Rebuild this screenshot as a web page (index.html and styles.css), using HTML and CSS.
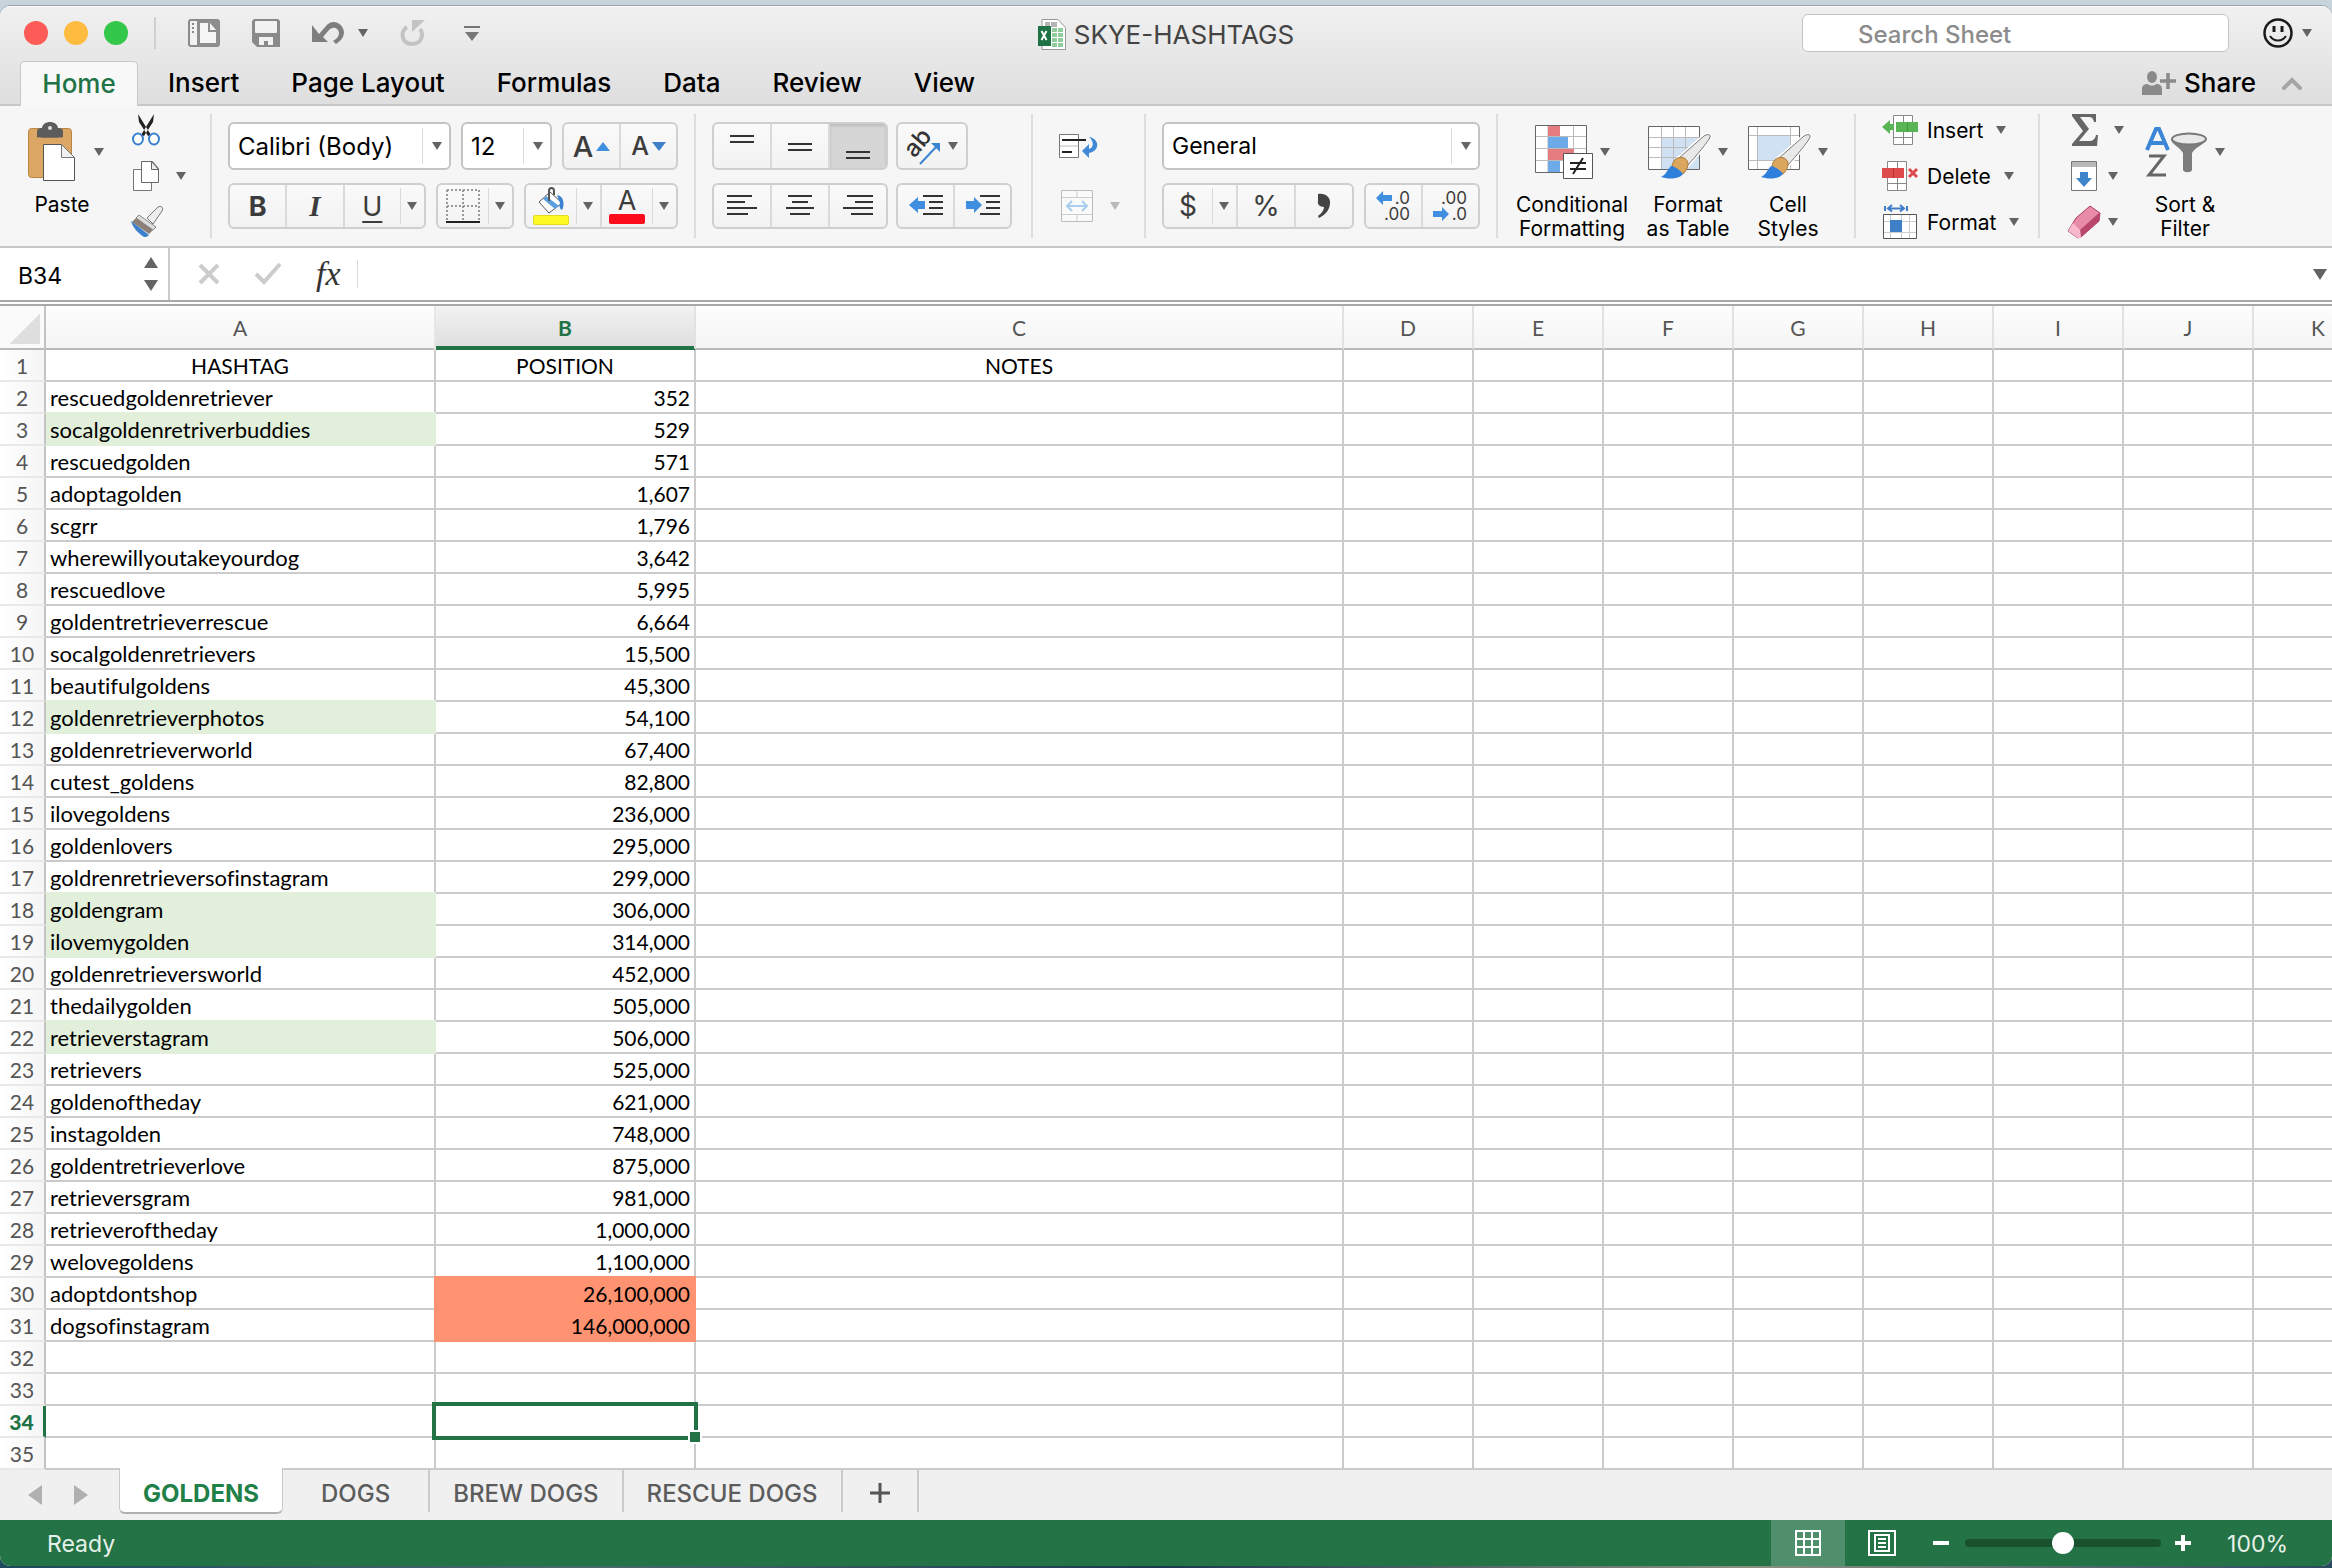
FILE: index.html
```html
<!DOCTYPE html>
<html lang="en">
<head>
    <meta charset="UTF-8">
    <meta name="viewport" content="width=device-width, initial-scale=1.0">
    <title>SKYE-HASHTAGS</title>
    <link rel="stylesheet" href="styles.css">
</head>
<body>
    <div class="window">
        <header class="titlebar">
            <div class="title-row">
                <div class="quick">
                    <div class="lights">
                        <button class="light red" aria-label="Close"></button>
                        <button class="light yellow" aria-label="Minimize"></button>
                        <button class="light green" aria-label="Zoom"></button>
                    </div>
                    <span class="divider"></span>
                    <button class="plain" aria-label="Templates">
                        <svg width="32" height="28" viewBox="0 0 32 28"><rect x="1" y="1" width="30" height="26" rx="2" fill="#f2f2f2" stroke="#8a8a8a" stroke-width="2"/><rect x="9" y="1" width="22" height="26" fill="#8e8e8e"/><path d="M12 4h10l6 7v13H12z" fill="#f6f6f6"/><path d="M21 4v8h7" fill="none" stroke="#8e8e8e" stroke-width="2"/><path d="M5 4v10" stroke="#8a8a8a" stroke-width="2" stroke-dasharray="2 2"/></svg>
                    </button>
                    <button class="plain" aria-label="Save">
                        <svg width="28" height="28" viewBox="0 0 28 28"><path d="M2 0h24l2 2v26H5l-5-5V2z" fill="#8a8a8a"/><rect x="3" y="2" width="22" height="12" rx="1" fill="#f2f2f2"/><path d="M7 18h14v8h-5v-4h-4v4H7z" fill="#f2f2f2"/></svg>
                    </button>
                    <button class="plain undo" aria-label="Undo">
                        <svg width="32" height="22" viewBox="0 0 32 22"><path d="M0 3v17h16l-5-5 6-7c5-5 10-1 10 3 0 3-2 6-6 8l3 3c5-3 8-7 8-12C31 1 20-4 14 4l-7 8z" fill="#7e7e7e"/></svg>
                        <span class="caret"></span>
                    </button>
                    <button class="plain" aria-label="Redo" disabled>
                        <svg width="26" height="27" viewBox="0 0 26 27"><path d="M7 7C0 11 1 24 12 24c10 0 12-10 8-15" fill="none" stroke="#c3c3c3" stroke-width="4"/><path d="M12 0h13L12 12z" fill="#c3c3c3"/></svg>
                    </button>
                    <button class="plain customize" aria-label="Customize toolbar">
                        <svg width="16" height="15" viewBox="0 0 16 15"><path d="M0 1h16" stroke="#777" stroke-width="2"/><path d="M1 6h14l-7 9z" fill="#777"/></svg>
                    </button>
                </div>
                <h1 class="doc-title">
                    <svg width="28" height="31" viewBox="0 0 28 31"><path d="M4 .5h16l7.500 8v22H4z" fill="#fff" stroke="#999"/><path d="M7 3h5v5H7zM13 3h6v5h-6z" fill="#b5b5b5"/><path d="M14 9h5v4h-5zM20 9h5v4h-5zM14 14h5v4h-5zM20 14h5v4h-5zM14 19h5v4h-5zM20 19h5v4h-5zM14 24h5v4h-5zM20 24h5v4h-5z" fill="#8fcb9b"/><path d="M0 7h13v20H0z" fill="#1f7244"/><path d="M3.500 12l5 9M8.500 12l-5 9" stroke="#fff" stroke-width="2"/></svg>
                    <span>SKYE-HASHTAGS</span>
                </h1>
                <div class="title-right">
                    <input class="search" type="text" placeholder="Search Sheet" aria-label="Search Sheet">
                    <button class="plain smile" aria-label="Feedback">
                        <svg width="30" height="30" viewBox="0 0 30 30"><circle cx="15" cy="15" r="13.500" fill="none" stroke="#1a1a1a" stroke-width="2.500"/><path d="M11 8v6M19 8v6" stroke="#1a1a1a" stroke-width="3"/><path d="M7 18c4 6 12 6 16 0" fill="none" stroke="#1a1a1a" stroke-width="2"/></svg>
                        <span class="caret"></span>
                    </button>
                </div>
            </div>
            <nav class="tabs">
                <button class="tab active">Home</button>
                <button class="tab">Insert</button>
                <button class="tab">Page Layout</button>
                <button class="tab">Formulas</button>
                <button class="tab">Data</button>
                <button class="tab">Review</button>
                <button class="tab">View</button>
                <button class="share">
                    <svg width="34" height="24" viewBox="0 0 34 24"><ellipse cx="10" cy="6" rx="5" ry="6" fill="#8a8a8a"/><path d="M0 24v-6c0-4 3-5 6-5 2 2 6 2 8 0 3 0 6 1 6 5v6z" fill="#8a8a8a"/><path d="M26 2v16M18 10h16" stroke="#8a8a8a" stroke-width="3.500"/></svg>
                    <span>Share</span>
                </button>
                <button class="plain collapse" aria-label="Collapse ribbon">
                    <svg width="20" height="13" viewBox="0 0 20 13"><path d="M2 11l8-8 8 8" fill="none" stroke="#a6a6a6" stroke-width="4" stroke-linecap="round"/></svg>
                </button>
            </nav>
        </header>

        <div class="ribbon">
            <section class="group clipboard">
                <button class="big">
                    <span class="big-icon">
                        <svg width="47" height="60" viewBox="0 0 47 60"><rect x=".5" y="6.500" width="43" height="49" rx="3" fill="#dca765" stroke="#b98543"/><path d="M9 15V9c0-2 2-3 5-3 1-8 15-8 16 0 3 0 5 1 5 3v6c0 1-26 1-26 0z" fill="#5c5c5c"/><circle cx="22" cy="6" r="2" fill="#e0e0e0"/><path d="M15.500 22.500h18l13 13v23h-31z" fill="#fff" stroke="#555"/><path d="M33.500 22.500v13h13z" fill="#f0f0f0" stroke="#777"/></svg>
                        <span class="caret"></span>
                    </span>
                    <span class="big-label">Paste</span>
                </button>
                <div class="stack">
                    <button class="small" aria-label="Cut">
                        <svg width="32" height="32" viewBox="0 0 32 32"><path d="M8 0l13 21-3 1L9 8zM24 0L11 21l3 1 9-14z" fill="#222"/><ellipse cx="8" cy="25" rx="5" ry="5.500" fill="#fff" stroke="#3a82cf" stroke-width="2"/><ellipse cx="24" cy="25" rx="5" ry="5.500" fill="#fff" stroke="#3a82cf" stroke-width="2"/></svg>
                    </button>
                    <button class="small" aria-label="Copy">
                        <svg width="32" height="32" viewBox="0 0 32 32"><path d="M3.500 9.500h18v21h-18z" fill="#fff" stroke="#777"/><path d="M11.500 1.500h11l6 7v14h-17z" fill="#fff" stroke="#666"/><path d="M21.500 1.500v8h7z" fill="#eee" stroke="#666"/></svg>
                        <span class="caret"></span>
                    </button>
                    <button class="small" aria-label="Format painter">
                        <svg width="34" height="32" viewBox="0 0 34 32"><path d="M17 12L28 1c3-2 6 1 4 4L23 18z" fill="#eee" stroke="#777"/><path d="M9 9l17 12-3 3L6 12z" fill="#ddd" stroke="#888"/><path d="M6 12l17 12-4 4L2 16z" fill="#8b7f78"/><path d="M1 15l18 14c-2 2-3 2-5 2C8 27 3 22 1 15z" fill="#3b7fcd"/></svg>
                    </button>
                </div>
            </section>

            <section class="group font-group">
                <div class="row">
                    <span class="combo font-name"><select aria-label="Font"><option>Calibri (Body)</option></select></span>
                    <span class="combo font-size"><select aria-label="Font size"><option>12</option></select></span>
                    <div class="seg size-seg">
                        <button aria-label="Increase font size"><span class="glyph-lg">A</span><i class="tri up"></i></button>
                        <button aria-label="Decrease font size"><span class="glyph-md">A</span><i class="tri down"></i></button>
                    </div>
                </div>
                <div class="row">
                    <div class="seg biu">
                        <button class="bold">B</button>
                        <button class="italic">I</button>
                        <button class="underline">U</button>
                        <button class="drop" aria-label="Underline options"><span class="caret"></span></button>
                    </div>
                    <div class="seg borders">
                        <button aria-label="Borders"><svg width="34" height="34" viewBox="0 0 34 34"><path d="M1 1h32M1 17h32M1 1v30M17 1v30M33 1v30" stroke="#999" stroke-width="2" stroke-dasharray="2 2"/><path d="M0 33h34" stroke="#222" stroke-width="2"/></svg></button>
                        <button class="drop" aria-label="Border options"><span class="caret"></span></button>
                    </div>
                    <div class="seg colors">
                        <button aria-label="Fill color"><svg width="36" height="38" viewBox="0 0 36 38"><path d="M17 5l12 11-13 10L6 15z" fill="#fff" stroke="#555"/><path d="M13 9l13 10-4 3-12-10z" fill="#5da0e0"/><path d="M16 14V4c0-4 5-4 5 0v4" fill="none" stroke="#555" stroke-width="2"/><path d="M24 8c7 1 8 10 5 15-2-1-3-3-2-7z" fill="#3c82d0"/><rect x=".5" y="28.500" width="35" height="9" rx="1" fill="#fdf922" stroke="#e3dc1c"/></svg></button>
                        <button class="drop" aria-label="Fill options"><span class="caret"></span></button>
                        <button class="font-color" aria-label="Font color"><span>A</span><i class="red-bar"></i></button>
                        <button class="drop" aria-label="Font color options"><span class="caret"></span></button>
                    </div>
                </div>
            </section>

            <section class="group align-group">
                <div class="row">
                    <div class="seg three">
                        <button aria-label="Top align"><svg width="24" height="30" viewBox="0 0 24 30"><path d="M0 5h24M0 11h24" stroke="#333" stroke-width="2"/></svg></button>
                        <button aria-label="Middle align"><svg width="24" height="30" viewBox="0 0 24 30"><path d="M0 13h24M0 19h24" stroke="#333" stroke-width="2"/></svg></button>
                        <button class="pressed" aria-label="Bottom align"><svg width="24" height="30" viewBox="0 0 24 30"><path d="M0 21h24M0 27h24" stroke="#333" stroke-width="2"/></svg></button>
                    </div>
                    <div class="seg orient">
                        <button aria-label="Orientation"><svg width="34" height="34" viewBox="0 0 34 34"><text x="4" y="28" transform="rotate(-50 8 24)" font-family="Inter, sans-serif" font-size="24" font-weight="500" fill="#333">ab</text><path d="M14 35L31 17" stroke="#3a84d2" stroke-width="2"/><path d="M25 14h9v9z" fill="#3a84d2"/></svg><span class="caret"></span></button>
                    </div>
                </div>
                <div class="row">
                    <div class="seg three">
                        <button aria-label="Align left"><svg width="30" height="22" viewBox="0 0 30 22"><path d="M0 1h25M0 7h18M0 13h30M0 19h21" stroke="#333" stroke-width="2"/></svg></button>
                        <button aria-label="Center"><svg width="28" height="22" viewBox="0 0 28 22"><path d="M2 1h24M6 7h16M0 13h28M4 19h20" stroke="#333" stroke-width="2"/></svg></button>
                        <button aria-label="Align right"><svg width="30" height="22" viewBox="0 0 30 22"><path d="M4 1h26M12 7h18M0 13h30M8 19h22" stroke="#333" stroke-width="2"/></svg></button>
                    </div>
                    <div class="seg indent">
                        <button aria-label="Decrease indent"><svg width="34" height="22" viewBox="0 0 34 22"><path d="M14 1h20M20 7h14M20 13h14M14 19h20" stroke="#333" stroke-width="2"/><path d="M0 10l9-8v4h7v8H9v4z" fill="#3f8ee0"/></svg></button>
                        <button aria-label="Increase indent"><svg width="34" height="22" viewBox="0 0 34 22"><path d="M14 1h20M20 7h14M20 13h14M14 19h20" stroke="#333" stroke-width="2"/><path d="M16 10L8 2v4H0v8h8v4z" fill="#3f8ee0"/></svg></button>
                    </div>
                </div>
            </section>

            <section class="group wrap-group">
                <button class="icon-row" aria-label="Wrap text">
                    <svg width="40" height="26" viewBox="0 0 40 26"><path d="M.5 1.500h19v23H.5z" fill="#fff" stroke="#777"/><path d="M1 13h18" stroke="#bbb"/><path d="M3 7h24M3 19h10" stroke="#222" stroke-width="2"/><path d="M30 4c10 1 12 14 0 16v5l-7-7 7-7v5c5-1 5-8 0-12z" fill="#4189d6"/></svg>
                </button>
                <button class="icon-row" aria-label="Merge cells" disabled>
                    <svg width="36" height="32" viewBox="0 0 36 32"><path d="M2.500.5h31v31h-31z" fill="#fafafa" stroke="#bcbcbc"/><path d="M3 7.500h30M3 24.500h30M18 0v7M18 25v7" stroke="#ccc"/><path d="M8 16h20M13 11l-5 5 5 5M23 11l5 5-5 5" fill="none" stroke="#a9cdef" stroke-width="2"/></svg>
                    <span class="caret"></span>
                </button>
            </section>

            <section class="group number-group">
                <div class="row">
                    <span class="combo format"><select aria-label="Number format"><option>General</option></select></span>
                </div>
                <div class="row">
                    <div class="seg number">
                        <button class="currency">$</button>
                        <button class="drop" aria-label="Currency options"><span class="caret"></span></button>
                        <button>%</button>
                        <button aria-label="Comma style"><svg width="14" height="24" viewBox="0 0 14 24"><path d="M1 0c8-1 13 4 12 10-1 7-5 11-11 14l-1-2c4-3 6-6 6-9-4 0-7-3-6-6z" fill="#444"/></svg></button>
                    </div>
                    <div class="seg decimals">
                        <button class="dec"><span><svg width="16" height="14" viewBox="0 0 16 14"><path d="M0 7l7-7v4h9v6H7v4z" fill="#3f8ee0"/></svg>&thinsp;.0</span><span>.00</span></button>
                        <button class="dec"><span>.00</span><span><svg width="16" height="14" viewBox="0 0 16 14"><path d="M16 7L9 0v4H0v6h9v4z" fill="#3f8ee0"/></svg>&thinsp;.0</span></button>
                    </div>
                </div>
            </section>

            <section class="group styles-group">
                <button class="big wide">
                    <span class="big-icon">
                        <svg width="58" height="54" viewBox="0 0 58 54"><path d="M.5.5h51v47H.5z" fill="#fff"/><path d="M13 .5v47M38.500 .5v47M.5 11.500h51M.5 23.500h51M.5 35.500h51" stroke="#bbb"/><path d="M13 1h12v10H13zM13 24h26v11H13z" fill="#e57c80"/><path d="M13 12h20v11H13zM13 36h12v11H13z" fill="#6daae8"/><path d="M.5.5h51v47H.5z" fill="none" stroke="#666"/><path d="M28.500 28.500h29v25h-29z" fill="#fff" stroke="#555"/><path d="M35 38h16M35 44h16M48 33L38 49" stroke="#222" stroke-width="2"/></svg>
                        <span class="caret"></span>
                    </span>
                    <span class="big-label">Conditional<br>Formatting</span>
                </button>
                <button class="big">
                    <span class="big-icon">
                        <svg width="63" height="54" viewBox="0 0 63 54"><path d="M.5 1.500h51v43H.5z" fill="#fff"/><path d="M13 12h38v32H13z" fill="#cfe1f3"/><path d="M13.500 2v43M25.500 2v43M37.500 2v43M.5 12.500h51M.5 22.500h51M.5 32.500h51" stroke="#bbb"/><path d="M.5 1.500h51v43H.5z" fill="none" stroke="#666"/><use href="#brush"/></svg>
                        <span class="caret"></span>
                    </span>
                    <span class="big-label">Format<br>as Table</span>
                </button>
                <button class="big">
                    <span class="big-icon">
                        <svg width="63" height="54" viewBox="0 0 63 54"><path d="M.5 1.500h51v43H.5z" fill="#fff"/><path d="M9 10h34v25H9z" fill="#cfe1f3"/><path d="M9.500 2v43M42.500 2v43M.5 10.500h51M.5 35.500h51" stroke="#bbb"/><path d="M.5 1.500h51v43H.5z" fill="none" stroke="#666"/>
                            <g id="brush"><path d="M31 33L56 11c3-2 7-2 6 1-1 4-14 19-22 28z" fill="#e9e9e9" stroke="#fff" stroke-width="4"/><path d="M31 33L56 11c3-2 7-2 6 1-1 4-14 19-22 28z" fill="#e9e9e9" stroke="#777"/><path d="M24 41c1-7 7-10 12-8 6 3 5 10-1 16z" fill="#dba75e" stroke="#a87a3a"/><path d="M23 41c5 1 9 4 12 8-5 6-16 5-22 3 5-2 6-7 10-11z" fill="#2f7fdc"/></g></svg>
                        <span class="caret"></span>
                    </span>
                    <span class="big-label">Cell<br>Styles</span>
                </button>
            </section>

            <section class="group cells-group">
                <button class="small">
                    <svg width="36" height="32" viewBox="0 0 36 32"><path d="M11.500 1.500h19v29h-19zM21.500 1v30M11.500 23.500h19" fill="#fff" stroke="#888"/><path d="M14 8h22v10H14z" fill="#58b455"/><path d="M0 13l8-7v4h4v6H8v4z" fill="#58b455"/><path d="M25.500 8v10" stroke="#3f9a3d"/></svg>
                    <span>Insert</span><span class="caret"></span>
                </button>
                <button class="small">
                    <svg width="36" height="32" viewBox="0 0 36 32"><path d="M5.500 1.500h19v29h-19zM15.500 1v30M5.500 23.500h19" fill="#fff" stroke="#888"/><path d="M0 8h22v10H0z" fill="#dd4b4c"/><path d="M11.500 8v10" stroke="#b83234"/><path d="M27 9l8 8M35 9l-8 8" stroke="#dd4b4c" stroke-width="3"/></svg>
                    <span>Delete</span><span class="caret"></span>
                </button>
                <button class="small">
                    <svg width="36" height="34" viewBox="0 0 36 34"><path d="M1.500 9.500h33v24h-33z" fill="#fff"/><path d="M8.500 9v24M19.500 9v24M27.500 9v24M1 16.500h33M1 27.500h33" stroke="#ccc"/><path d="M1.500 9.500h33v24h-33z" fill="none" stroke="#555"/><path d="M8 15h12v12H8z" fill="#3f7fc8"/><path d="M3 1v5M25 1v5M7 3.500h14M10 0L6 3.500l4 3M18 0l4 3.500-4 3" fill="none" stroke="#3f7fc8" stroke-width="2"/></svg>
                    <span>Format</span><span class="caret"></span>
                </button>
            </section>

            <section class="group edit-group">
                <div class="stack">
                    <button class="small sum" aria-label="AutoSum">
                        <svg width="34" height="32" viewBox="0 0 34 32"><path d="M4 0h24v8h-2c-1-4-2-5-6-5h-8l9 12-10 12h10c4 0 6-2 7-6h2l-1 11H4v-2l11-13L4 2z" fill="#666"/></svg>
                        <span class="caret"></span>
                    </button>
                    <button class="small" aria-label="Fill">
                        <svg width="34" height="32" viewBox="0 0 34 32"><path d="M3.500 1.500h25v29h-25z" fill="#fff" stroke="#777"/><path d="M4 2h24v5H4z" fill="#b9b9b9"/><path d="M12 12h8v6h4l-8 9-8-9h4z" fill="#4084cc"/></svg>
                        <span class="caret"></span>
                    </button>
                    <button class="small" aria-label="Clear">
                        <svg width="34" height="34" viewBox="0 0 34 34"><path d="M8 13L22 1l10 7-1 8-18 16-3 1L0 26z" fill="#e88ba6" stroke="#a83e60"/><path d="M12 25L31 8l1 1-1 7-18 16z" fill="#b8476b"/><path d="M5 18l7 7 1 8-3 0L0 26z" fill="#f6b8ca"/></svg>
                        <span class="caret"></span>
                    </button>
                </div>
                <button class="big">
                    <span class="big-icon">
                        <svg width="62" height="52" viewBox="0 0 62 52"><path d="M1 24L10 3h3l9 21M5 17h13" fill="none" stroke="#3b86d6" stroke-width="4"/><path d="M3 30h15L3 49h17" fill="none" stroke="#666" stroke-width="3"/><path d="M25 13c0 5 9 8 12 14v17c1 3 8 3 9 0V27c3-6 14-9 14-14z" fill="#7d7d7d"/><ellipse cx="43" cy="13" rx="17" ry="5.500" fill="#e8e8e8" stroke="#777" stroke-width="2"/></svg>
                        <span class="caret"></span>
                    </span>
                    <span class="big-label">Sort &amp;<br>Filter</span>
                </button>
            </section>
        </div>

        <div class="formula-bar">
            <div class="name-box">
                <input type="text" value="B34" aria-label="Name box">
                <span class="stepper"><i></i><i></i></span>
            </div>
            <button class="plain" aria-label="Cancel" disabled><svg width="22" height="22" viewBox="0 0 22 22"><path d="M2 2l18 18M20 2L2 20" stroke="#ccc" stroke-width="4"/></svg></button>
            <button class="plain" aria-label="Enter" disabled><svg width="28" height="22" viewBox="0 0 28 22"><path d="M2 11l8 8L26 1" fill="none" stroke="#ccc" stroke-width="4"/></svg></button>
            <button class="plain fx" aria-label="Insert function">fx</button>
            <input class="formula" type="text" aria-label="Formula">
            <span class="caret large"></span>
        </div>

        <main class="sheet">
            <table>
                <colgroup>
                    <col class="c-num"><col class="c-a"><col class="c-b"><col class="c-c">
                    <col span="8" class="c-rest">
                </colgroup>
                <thead><tr id="letters"></tr></thead>
                <tbody id="cells"></tbody>
            </table>
        </main>

        <div class="sheet-tabs">
            <button class="nav prev" aria-label="Previous sheet"></button>
            <button class="nav next" aria-label="Next sheet"></button>
            <button class="sheet-tab current">GOLDENS</button>
            <button class="sheet-tab">DOGS</button>
            <button class="sheet-tab">BREW DOGS</button>
            <button class="sheet-tab">RESCUE DOGS</button>
            <button class="sheet-tab add" aria-label="Add sheet"><svg width="20" height="20" viewBox="0 0 20 20"><path d="M10 0v20M0 10h20" stroke="#555" stroke-width="3"/></svg></button>
        </div>

        <footer class="status">
            <span class="ready">Ready</span>
            <button class="view on" aria-label="Normal view"><svg width="26" height="26" viewBox="0 0 26 26"><path d="M1 1h24v24H1zM9 1v24M17 1v24M1 9h24M1 17h24" fill="none" stroke="#fff" stroke-width="2"/></svg></button>
            <button class="view" aria-label="Page layout view"><svg width="28" height="26" viewBox="0 0 28 26"><path d="M1 1h26v24H1z" fill="none" stroke="#fff" stroke-width="2"/><path d="M7 5h14v16H7zM10 9h8M10 13h8M10 17h8" fill="none" stroke="#fff" stroke-width="2"/></svg></button>
            <button class="zoom-btn" aria-label="Zoom out"><svg width="16" height="16" viewBox="0 0 16 16"><path d="M0 8h16" stroke="#fff" stroke-width="4"/></svg></button>
            <input type="range" min="0" max="100" value="50" aria-label="Zoom">
            <button class="zoom-btn" aria-label="Zoom in"><svg width="16" height="16" viewBox="0 0 16 16"><path d="M0 8h16M8 0v16" stroke="#fff" stroke-width="4"/></svg></button>
            <span class="percent">100%</span>
        </footer>
    </div>

    <script>
        const rows = [
            ['HASHTAG', 'POSITION', 'NOTES'],
            ['rescuedgoldenretriever', '352'],
            ['socalgoldenretriverbuddies', '529'],
            ['rescuedgolden', '571'],
            ['adoptagolden', '1,607'],
            ['scgrr', '1,796'],
            ['wherewillyoutakeyourdog', '3,642'],
            ['rescuedlove', '5,995'],
            ['goldentretrieverrescue', '6,664'],
            ['socalgoldenretrievers', '15,500'],
            ['beautifulgoldens', '45,300'],
            ['goldenretrieverphotos', '54,100'],
            ['goldenretrieverworld', '67,400'],
            ['cutest_goldens', '82,800'],
            ['ilovegoldens', '236,000'],
            ['goldenlovers', '295,000'],
            ['goldrenretrieversofinstagram', '299,000'],
            ['goldengram', '306,000'],
            ['ilovemygolden', '314,000'],
            ['goldenretrieversworld', '452,000'],
            ['thedailygolden', '505,000'],
            ['retrieverstagram', '506,000'],
            ['retrievers', '525,000'],
            ['goldenoftheday', '621,000'],
            ['instagolden', '748,000'],
            ['goldentretrieverlove', '875,000'],
            ['retrieversgram', '981,000'],
            ['retrieveroftheday', '1,000,000'],
            ['welovegoldens', '1,100,000'],
            ['adoptdontshop', '26,100,000'],
            ['dogsofinstagram', '146,000,000'],
        ];
        const greenRows = [3, 12, 18, 19, 22];
        const orangeRows = [30, 31];
        const letters = 'ABCDEFGHIJK'.split('');
        const totalRows = 35;
        const selected = { row: 34, col: 1 };

        document.getElementById('letters').innerHTML = '<th class="corner"></th>' +
            letters.map((l, i) => `<th class="${i === selected.col ? 'selected' : ''}">${l}</th>`).join('');

        const tbody = document.getElementById('cells');
        for (let r = 1; r <= totalRows; r++) {
            const row = tbody.insertRow();
            if (r === 1) row.className = 'head';
            let html = `<th class="${r === selected.row ? 'selected' : ''}">${r}</th>`;
            letters.forEach((l, i) => {
                let cls = i === 0 ? 'tag' : '';
                if (i === 0 && greenRows.includes(r)) cls = 'tag good';
                if (i === 1) cls = orangeRows.includes(r) ? 'num bad' : 'num';
                const cursor = r === selected.row && i === selected.col;
                if (cursor) cls += ' cursor';
                const text = (rows[r - 1] && rows[r - 1][i]) || '';
                html += `<td class="${cls}">${text}${cursor ? '<i class="frame"></i>' : ''}</td>`;
            });
            row.innerHTML = html;
        }
    </script>
</body>
</html>
```
FILE: styles.css
```css
* {
    box-sizing: border-box;
}
body {
    margin: 0;
    padding: 6px 0 2px;
    background-color: #c7d4db;
    background-image: linear-gradient(to right, #1c4a5c, #4a6a6c, #1c3850, #8a9080, #2a4a60);
    background-size: 100% 100px;
    background-position: bottom;
    background-repeat: no-repeat;
    font-family: Inter, "Liberation Sans", sans-serif;
    color: #111;
}
.window {
    border-radius: 10px;
    overflow: hidden;
    background: #fff;
    box-shadow: 0 -1px 0 #9aa5ab;
}
button {
    font: inherit;
    color: inherit;
    padding: 0;
    border: none;
    background: none;
    display: flex;
    align-items: center;
    justify-content: center;
}
svg {
    display: block;
    flex: none;
    overflow: visible;
}
.caret {
    flex: none;
    border-left: 5px solid transparent;
    border-right: 5px solid transparent;
    border-top: 8px solid #646464;
}
.caret.large {
    border-left-width: 7px;
    border-right-width: 7px;
    border-top-width: 11px;
}

/* title bar */
.titlebar {
    background: linear-gradient(#f0f0f0, #dedede);
    border-top: 1px solid #fafafa;
    box-shadow: inset 0 -2px 0 #c8c8c8;
}
.title-row {
    height: 52px;
    display: grid;
    grid-template-columns: 1fr auto 1fr;
    align-items: center;
}
.quick {
    display: flex;
    align-items: center;
    padding-left: 24px;
    gap: 32px;
}
.lights {
    display: flex;
    gap: 16px;
}
.light {
    width: 24px;
    height: 24px;
    border-radius: 50%;
}
.red { background: #fc5b57; }
.yellow { background: #fdbc40; }
.green { background: #34c84a; }
.divider {
    width: 2px;
    height: 32px;
    margin-left: -6px;
    background: #d0d0d0;
}
.undo { gap: 14px; }
.customize { margin-left: 6px; }
.doc-title {
    margin: 0;
    padding-top: 2px;
    display: flex;
    align-items: center;
    gap: 8px;
    font-size: 26px;
    font-weight: 400;
    color: #444;
}
.title-right {
    display: flex;
    justify-content: flex-end;
    align-items: center;
    padding-right: 20px;
    gap: 34px;
}
.search {
    width: 427px;
    height: 38px;
    border: 1px solid #c4c4c4;
    border-radius: 6px;
    background: #fff;
    padding: 2px 0 0 55px;
    font: 500 24px Inter, sans-serif;
}
.search::placeholder {
    color: #8c8c8c;
}
.smile { gap: 9px; }
.tabs {
    display: flex;
    align-items: flex-end;
    height: 47px;
    padding: 0 30px 0 20px;
}
.tab, .share {
    height: 45px;
    padding: 0 26px 2px;
    font-size: 26px;
    font-weight: 500;
    color: #000;
}
.tab.active {
    width: 118px;
    padding: 0 0 2px;
    margin-right: 4px;
    color: #217346;
    background: #f8f8f8;
    border: 1px solid #c8c8c8;
    border-bottom: none;
    border-radius: 5px 5px 0 0;
}
.share {
    margin-left: auto;
    gap: 8px;
}
.collapse {
    height: 45px;
}

/* ribbon */
.ribbon {
    display: flex;
    height: 142px;
    padding: 8px 0;
    background: #f6f6f6;
    border-bottom: 2px solid #c8c8c8;
    overflow: hidden;
}
.group {
    flex: none;
    height: 124px;
    border-right: 2px solid #dedede;
}
.row {
    display: flex;
    height: 48px;
    gap: 10px;
}
.row + .row {
    height: 46px;
    margin-top: 13px;
}
.big {
    flex-direction: column;
    justify-content: flex-start;
    align-self: flex-start;
    width: 84px;
    font-size: 21px;
    line-height: 24px;
    color: #000;
}
.big.wide {
    width: 116px;
}
.big-icon {
    display: flex;
    align-items: center;
    gap: 7px;
    height: 79px;
    padding-bottom: 4px;
}
.small {
    height: 32px;
    gap: 9px;
    font-size: 21px;
    color: #000;
}
.stack {
    display: flex;
    flex-direction: column;
    align-items: flex-start;
    gap: 14px;
}
.clipboard {
    width: 212px;
    display: flex;
    gap: 26px;
    padding-left: 20px;
}
.clipboard .big-icon {
    align-self: flex-end;
    gap: 19px;
}
.clipboard .small {
    gap: 14px;
}
.font-group {
    padding: 8px 16px;
    width: 484px;
}
.align-group {
    padding: 8px 16px;
    width: 337px;
}
.align-group .row {
    gap: 8px;
}
.wrap-group {
    width: 113px;
    padding: 8px 0 0 26px;
}
.icon-row {
    height: 48px;
    gap: 15px;
}
.icon-row + .icon-row {
    margin-top: 12px;
}
.icon-row:disabled .caret {
    border-top-color: #b8b8b8;
}
.number-group {
    width: 352px;
    padding: 8px 16px;
}
.styles-group {
    width: 358px;
    display: flex;
    gap: 16px;
    padding-left: 16px;
}
.cells-group {
    width: 184px;
    display: flex;
    flex-direction: column;
    align-items: flex-start;
    gap: 14px;
    padding-left: 26px;
}
.cells-group .caret {
    margin-left: 4px;
}
.edit-group {
    display: flex;
    gap: 19px;
    padding-left: 28px;
    border-right: none;
}
.edit-group .small {
    gap: 6px;
}
.edit-group .small.sum {
    gap: 12px;
}

.combo {
    position: relative;
    display: block;
}
.combo select {
    width: 100%;
    height: 48px;
    appearance: none;
    border: 2px solid #c4c4c4;
    border-radius: 6px;
    background: #fff;
    padding: 0 0 0 8px;
    font: 24px Inter, sans-serif;
    color: #000;
}
.combo::before {
    content: "";
    position: absolute;
    right: 28px;
    top: 6px;
    width: 1px;
    height: 36px;
    background: #dcdcdc;
}
.combo::after {
    content: "";
    position: absolute;
    right: 9px;
    top: 20px;
    border: 5px solid transparent;
    border-top: 8px solid #646464;
    border-bottom: none;
}
.font-name { width: 223px; }
.font-size { width: 91px; }
.format { width: 318px; }
.format select { font-size: 23px; }

.seg {
    display: flex;
    border: 2px solid #cfcfcf;
    border-radius: 6px;
    background: linear-gradient(#fafafa, #f2f2f2);
    overflow: hidden;
}
.seg button {
    flex: 1;
    border-left: 2px solid #dadada;
    color: #3c3c3c;
}
.seg button:first-child {
    border-left: none;
}
.seg .drop {
    flex: none;
    width: 24px;
    border-left: none;
    background: linear-gradient(#dadada, #dadada) 0 50% / 1px 36px no-repeat;
}
.seg .pressed {
    background: #d6d6d6;
    box-shadow: inset 0 2px 3px #bbb;
}
.size-seg { width: 116px; }
.biu { width: 198px; font-size: 27px; }
.borders { width: 78px; }
.colors { width: 154px; }
.three { width: 176px; }
.orient { width: 72px; }
.seg.orient button { gap: 8px; }
.indent { width: 116px; }
.number { width: 192px; font-size: 28px; }
.seg .currency { flex: none; width: 48px; }
.decimals { width: 116px; }
.glyph-lg { font-size: 29px; font-weight: 500; }
.glyph-md { font-size: 25px; font-weight: 500; }
.tri {
    border: 7px solid transparent;
    margin-left: 3px;
}
.tri.up {
    border-top: none;
    border-bottom: 9px solid #3f8ee0;
}
.tri.down {
    border-bottom: none;
    border-top: 9px solid #3f7fc8;
}
.bold { font-weight: 700; }
.italic {
    font-family: "Liberation Serif", serif;
    font-size: 29px;
    font-style: italic;
    font-weight: 700;
}
.underline {
    text-decoration: underline;
    text-decoration-thickness: 2px;
    text-underline-offset: 5px;
}
.seg .font-color {
    flex-direction: column;
    font-size: 27px;
    line-height: 26px;
}
.red-bar {
    width: 36px;
    height: 10px;
    border-radius: 2px;
    background: #fb0d1b;
}
.seg .dec {
    flex-direction: column;
    align-items: flex-end;
    padding-right: 11px;
    font-size: 17px;
    line-height: 16px;
}
.dec span {
    display: flex;
    align-items: center;
}

/* formula bar */
.formula-bar {
    display: flex;
    align-items: center;
    height: 58px;
    padding-right: 5px;
    background: #fff;
    border-bottom: 6px double #a8a8a8;
}
.name-box {
    display: flex;
    align-items: center;
    width: 170px;
    height: 52px;
    padding: 0 10px 0 18px;
    border-right: 2px solid #cbcbcb;
    margin-right: 28px;
}
.name-box input {
    flex: 1;
    min-width: 0;
    border: none;
    padding: 4px 0 0;
    font: 23px Inter, sans-serif;
    color: #000;
}
.stepper {
    display: flex;
    flex-direction: column;
    gap: 12px;
}
.stepper i {
    border: 7px solid transparent;
    border-top: none;
    border-bottom: 11px solid #646464;
}
.stepper i + i {
    border-bottom: none;
    border-top: 11px solid #646464;
}
.formula-bar .plain + .plain {
    margin-left: 34px;
}
.fx {
    font: italic 34px "Liberation Serif", serif;
    color: #333;
}
.formula {
    flex: 1;
    height: 28px;
    margin-left: 16px;
    border: none;
    border-left: 1px solid #d8d8d8;
    font: 23px Inter, sans-serif;
}

/* grid */
.sheet {
    overflow: hidden;
}
table {
    width: 2384px;
    table-layout: fixed;
    border-collapse: separate;
    border-spacing: 0;
    font: 21px/28px Lato, sans-serif;
    font-variant-ligatures: none;
    color: #000;
}
.c-num { width: 46px; }
.c-a { width: 390px; }
.c-b { width: 260px; }
.c-c { width: 648px; }
.c-rest { width: 130px; }
th, td {
    height: 32px;
    padding: 2px 4px 0;
    border-right: 2px solid #cbcbcb;
    border-bottom: 2px solid #cbcbcb;
    white-space: nowrap;
    line-height: 28px;
}
th {
    font-weight: 400;
    color: #555;
    text-align: center;
}
thead th {
    height: 44px;
    background: linear-gradient(#fdfdfd, #f5f5f5);
    border-right-color: #e2e2e2;
    border-bottom-color: #bababa;
}
thead th.selected {
    background: linear-gradient(#f2f2f2, #dedede);
    box-shadow: inset 0 -2px 0 #217346, -2px 0 0 #e6e6e6;
    border-bottom-color: #217346;
    color: #217346;
    font-weight: 700;
}
thead .corner {
    background: linear-gradient(135deg, transparent 50%, #dedede 50%) 10px 8px / 30px 30px no-repeat, #fafafa;
    border-right-color: #c3c3c3;
}
tbody th {
    padding: 2px 0 0;
    background: linear-gradient(to right, #fff, #f5f5f5);
    border-right-color: #c3c3c3;
    border-bottom-color: #e8e8e8;
}
tbody th.selected {
    color: #217346;
    font-weight: 900;
    border-right: 3px solid #217346;
}
.tag {
    font-size: 22px;
}
.num {
    text-align: right;
}
.head td {
    font-size: 21px;
    text-align: center;
}
.good {
    background: #e2efda;
    border-color: #e2efda;
    box-shadow: 0 -2px 0 #e2efda;
}
.bad {
    background: #ff9270;
    border-color: #ff9270;
    box-shadow: 0 -2px 0 #ff9270, -2px -2px 0 #ff9270, -2px 0 0 #ff9270;
}
.cursor {
    position: relative;
}
.frame {
    position: absolute;
    inset: -4px;
    border: 4px solid #217346;
}
.frame::after {
    content: "";
    position: absolute;
    right: -8px;
    bottom: -8px;
    width: 10px;
    height: 10px;
    border: 2px solid #fff;
    background: #217346;
}

/* sheet tabs */
.sheet-tabs {
    display: flex;
    align-items: flex-start;
    height: 50px;
    padding-left: 28px;
    background: #f0f0f0;
}
.nav {
    align-self: center;
    border: 10px solid transparent;
}
.prev {
    border-left: none;
    border-right: 14px solid #b0b0b0;
    margin-right: 32px;
}
.next {
    border-right: none;
    border-left: 14px solid #b0b0b0;
    margin-right: 31px;
}
.sheet-tab {
    height: 42px;
    padding: 4px 23px 0;
    border-right: 2px solid #cbcbcb;
    font: 500 24px Inter, sans-serif;
    color: #5c5c5c;
}
.sheet-tab.current {
    height: 46px;
    margin-top: -2px;
    padding: 6px 23px 0;
    background: #fff;
    border: 1px solid #c8c8c8;
    border-top: none;
    border-bottom: 2px solid #b0b0b0;
    border-radius: 0 0 6px 6px;
    color: #1f8048;
    font-weight: 700;
}
.sheet-tab.current + .sheet-tab {
    padding: 4px 38px 0;
}
.sheet-tab.add {
    width: 76px;
    padding: 4px 0 0;
}

/* status bar */
.status {
    display: flex;
    align-items: center;
    height: 46px;
    padding: 0 44px 0 47px;
    background: #247346;
    color: #e6f1ea;
    font-size: 23px;
}
.ready {
    margin-right: auto;
    padding-top: 2px;
}
.view {
    width: 74px;
    height: 46px;
}
.view.on {
    background: #508f6b;
}
.zoom-btn {
    margin: 0 16px 0 14px;
}
.status input {
    appearance: none;
    width: 196px;
    height: 8px;
    margin: 0;
    border-radius: 4px;
    background: #19512f;
}
.status input::-webkit-slider-thumb {
    appearance: none;
    width: 22px;
    height: 22px;
    border-radius: 50%;
    background: #fff;
}
.percent {
    margin-left: 20px;
    padding-top: 2px;
}
```
